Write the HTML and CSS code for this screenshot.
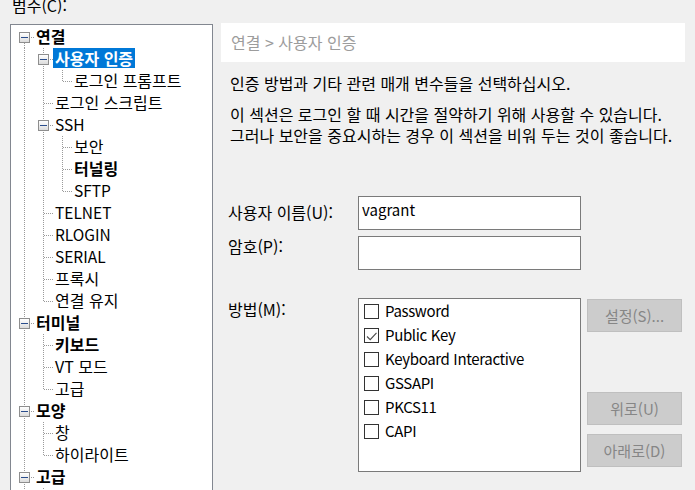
FILE: index.html
```html
<!DOCTYPE html>
<html lang="ko">
<head>
<meta charset="utf-8">
<title>세션 옵션</title>
<link rel="stylesheet" href="styles.css">
</head>
<body>
<div class="caption">범주(C):</div>
<div class="main">
  <div class="tree">
    <div class="row"><span class="c xf"><span class="box"></span></span><span class="lbl b">연결</span></div>
    <div class="row"><span class="c v"></span><span class="c t"><span class="box"></span></span><span class="lbl b sel">사용자 인증</span></div>
    <div class="row"><span class="c v"></span><span class="c v"></span><span class="c l"></span><span class="lbl">로그인 프롬프트</span></div>
    <div class="row"><span class="c v"></span><span class="c t"></span><span class="lbl">로그인 스크립트</span></div>
    <div class="row"><span class="c v"></span><span class="c t"><span class="box"></span></span><span class="lbl lat">SSH</span></div>
    <div class="row"><span class="c v"></span><span class="c v"></span><span class="c t"></span><span class="lbl">보안</span></div>
    <div class="row"><span class="c v"></span><span class="c v"></span><span class="c t"></span><span class="lbl b">터널링</span></div>
    <div class="row"><span class="c v"></span><span class="c v"></span><span class="c l"></span><span class="lbl lat">SFTP</span></div>
    <div class="row"><span class="c v"></span><span class="c t"></span><span class="lbl lat">TELNET</span></div>
    <div class="row"><span class="c v"></span><span class="c t"></span><span class="lbl lat">RLOGIN</span></div>
    <div class="row"><span class="c v"></span><span class="c t"></span><span class="lbl lat">SERIAL</span></div>
    <div class="row"><span class="c v"></span><span class="c t"></span><span class="lbl">프록시</span></div>
    <div class="row"><span class="c v"></span><span class="c l"></span><span class="lbl">연결 유지</span></div>
    <div class="row"><span class="c t"><span class="box"></span></span><span class="lbl b">터미널</span></div>
    <div class="row"><span class="c v"></span><span class="c t"></span><span class="lbl b">키보드</span></div>
    <div class="row"><span class="c v"></span><span class="c t"></span><span class="lbl">VT 모드</span></div>
    <div class="row"><span class="c v"></span><span class="c l"></span><span class="lbl">고급</span></div>
    <div class="row"><span class="c t"><span class="box"></span></span><span class="lbl b">모양</span></div>
    <div class="row"><span class="c v"></span><span class="c t"></span><span class="lbl">창</span></div>
    <div class="row"><span class="c v"></span><span class="c l"></span><span class="lbl">하이라이트</span></div>
    <div class="row"><span class="c t"><span class="box"></span></span><span class="lbl b">고급</span></div>
    <div class="row"><span class="c v"></span><span class="c t"></span></div>
  </div>
  <div class="panel">
    <div class="crumb">연결 &gt; 사용자 인증</div>
    <p class="desc first">인증 방법과 기타 관련 매개 변수들을 선택하십시오.</p>
    <p class="desc second">이 섹션은 로그인 할 때 시간을 절약하기 위해 사용할 수 있습니다.<br>그러나 보안을 중요시하는 경우 이 섹션을 비워 두는 것이 좋습니다.</p>
    <div class="frow">
      <span class="flabel user">사용자 이름(U):</span>
      <div class="input">vagrant</div>
    </div>
    <div class="frow gap6">
      <span class="flabel pw">암호(P):</span>
      <div class="input"></div>
    </div>
    <div class="frow gap28">
      <span class="flabel method">방법(M):</span>
      <div class="list">
        <div class="item"><span class="cb"></span><span class="itxt">Password</span></div>
        <div class="item"><span class="cb"><svg width="13" height="13" viewBox="0 0 13 13"><path d="M2 7.5 L5.2 10.6 L11.5 3.8" fill="none" stroke="#4a4a4a" stroke-width="1.1"/></svg></span><span class="itxt">Public Key</span></div>
        <div class="item"><span class="cb"></span><span class="itxt">Keyboard Interactive</span></div>
        <div class="item"><span class="cb"></span><span class="itxt">GSSAPI</span></div>
        <div class="item"><span class="cb"></span><span class="itxt">PKCS11</span></div>
        <div class="item"><span class="cb"></span><span class="itxt">CAPI</span></div>
      </div>
      <div class="btns">
        <div class="btn setup">설정(S)...</div>
        <div class="btn up">위로(U)</div>
        <div class="btn down">아래로(D)</div>
      </div>
    </div>
  </div>
</div>
</body>
</html>
```

FILE: styles.css
```css
html, body {
  margin: 0;
  padding: 0;
}
body {
  width: 695px;
  height: 490px;
  overflow: hidden;
  background: #f0f0f0;
  font-family: "Noto Sans CJK KR", "Noto Sans", sans-serif;
  font-size: 16px;
  color: #000;
  --dv: repeating-linear-gradient(to bottom, #9a9a9a 0 1px, transparent 1px 2px);
  --dh: repeating-linear-gradient(to right, #9a9a9a 0 1px, transparent 1px 2px);
}
.caption {
  line-height: 20px;
  margin: -5px 0 0 12px;
}
.main {
  display: flex;
  align-items: flex-start;
  margin-top: 9px;
}
.tree {
  flex: none;
  width: 203px;
  height: 480px;
  box-sizing: border-box;
  margin-left: 10px;
  border: 1px solid #828790;
  background: #fff;
  padding: 1px 0 0 4px;
  overflow: hidden;
}
.row {
  display: flex;
  align-items: flex-start;
  height: 22px;
}
.c {
  flex: none;
  width: 19px;
  height: 22px;
  display: flex;
  align-items: flex-start;
}
.v {
  background: var(--dv) 9px 0 / 1px 100% no-repeat;
}
.t {
  background: var(--dh) 10px 11px / 9px 1px no-repeat, var(--dv) 9px 0 / 1px 100% no-repeat;
}
.l {
  background: var(--dh) 10px 11px / 9px 1px no-repeat, var(--dv) 9px 0 / 1px 12px no-repeat;
}
.xf {
  background: var(--dh) 10px 11px / 9px 1px no-repeat, var(--dv) 9px 11px / 1px 11px no-repeat;
}
.box {
  width: 11px;
  height: 11px;
  box-sizing: border-box;
  margin: 6px 0 0 4px;
  border: 1px solid #8e8e8e;
  background: linear-gradient(#ffffff, #dcdcdc);
  display: flex;
  align-items: center;
  justify-content: center;
}
.box::before {
  content: "";
  width: 7px;
  height: 1px;
  background: #2a4d8c;
}
.lbl {
  line-height: 20px;
  padding: 0 2px;
  white-space: nowrap;
}
.lbl.lat {
  font-size: 15.5px;
}
.lbl.b {
  font-weight: 700;
}
.lbl.sel {
  background: #0078d7;
  color: #fff;
}
.panel {
  flex: none;
  width: 464px;
  margin: -1px 0 0 8px;
}
.crumb {
  height: 39px;
  line-height: 39px;
  background: #fff;
  padding-left: 10px;
  color: #9c9c9c;
}
.desc {
  margin: 0 0 0 9px;
  line-height: 20px;
}
.desc.first {
  margin-top: 11px;
}
.desc.second {
  margin-top: 11px;
  line-height: 21px;
}
.frow {
  display: flex;
  align-items: flex-start;
  margin: 50px 0 0 7px;
}
.frow.gap6 {
  margin-top: 6px;
}
.frow.gap28 {
  margin-top: 28px;
}
.flabel {
  flex: none;
  width: 130px;
  line-height: 20px;
}
.flabel.user {
  padding-top: 6px;
}
.flabel.method {
  padding-top: 1px;
}
.input {
  flex: none;
  width: 223px;
  height: 34px;
  box-sizing: border-box;
  border: 1px solid #7a7a7a;
  background: #fff;
  padding: 3px 3px 0;
  line-height: 20px;
  font-size: 15px;
}
.list {
  flex: none;
  width: 223px;
  height: 174px;
  box-sizing: border-box;
  border: 1px solid #7a7a7a;
  background: #fff;
  padding: 0 0 0 5px;
}
.item {
  display: flex;
  align-items: flex-start;
  height: 24px;
}
.cb {
  flex: none;
  width: 15px;
  height: 15px;
  box-sizing: border-box;
  border: 1px solid #333;
  background: #fff;
  margin-top: 5px;
  display: flex;
}
.itxt {
  margin: 2px 0 0 6px;
  line-height: 20px;
  font-size: 15px;
  letter-spacing: -0.35px;
  white-space: nowrap;
}
.btns {
  flex: none;
  display: flex;
  flex-direction: column;
  margin-left: 6px;
}
.btn {
  width: 95px;
  height: 33px;
  box-sizing: border-box;
  border: 1px solid #bfbfbf;
  background: #cccccc;
  color: #868686;
  font-size: 15px;
  display: flex;
  align-items: center;
  justify-content: center;
}
.btn.setup {
  margin-top: 1px;
}
.btn.up {
  margin-top: 60px;
}
.btn.down {
  margin-top: 9px;
}
```
